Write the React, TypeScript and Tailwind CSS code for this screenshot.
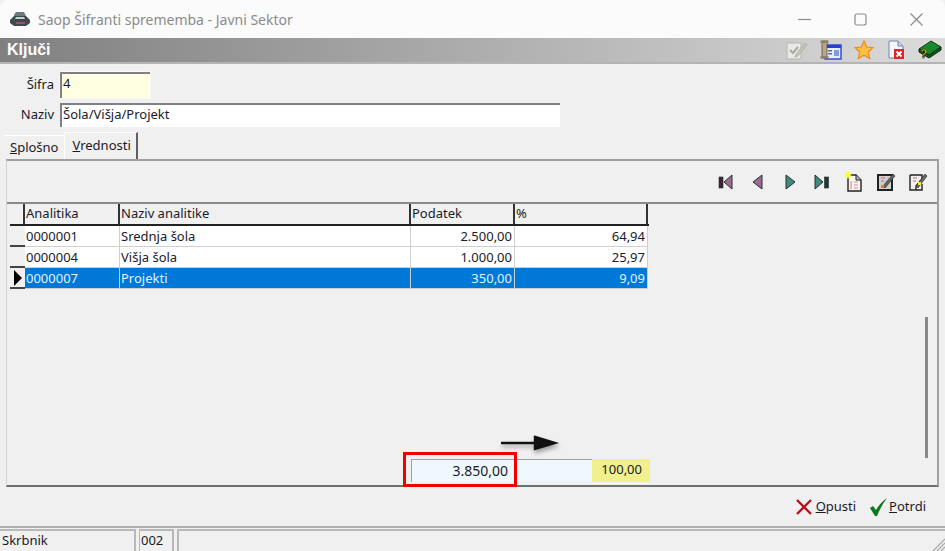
const rows = [
  { code: '0000001', name: 'Srednja šola', value: '2.500,00', pct: '64,94' },
  { code: '0000004', name: 'Višja šola', value: '1.000,00', pct: '25,97' },
  { code: '0000007', name: 'Projekti', value: '350,00', pct: '9,09', selected: true },
];

function PrinterIcon() {
  return (
    <svg width="20" height="14" viewBox="0 0 20 14">
      <path d="M0 8 L4 4 H16 L20 8 V11 L16 14 H4 L0 11 Z" fill="#3f4a4c" />
      <path d="M4 3 L6 0 H14 L16 4 H4 Z" fill="#6d7a7c" />
      <path d="M6 5 H14 L15 7 H5 Z" fill="#c9d0d0" />
      <rect x="6" y="10" width="9" height="2" fill="#a04a80" />
    </svg>
  );
}

function ToolbarIcons() {
  return (
    <div className="flex items-center gap-[12px]">
      <svg width="22" height="20" viewBox="0 0 22 20">
        <rect x="1" y="3" width="14" height="16" fill="#e8e8e4" stroke="#b5b5ae" />
        <path d="M4 10 L7 13 L12 7" fill="none" stroke="#a8a8a0" strokeWidth="2" />
        <path d="M10 14 L19 3 L21 5 L12 16 L9 17 Z" fill="#c4c4bc" stroke="#a0a098" strokeWidth="0.6" />
      </svg>
      <svg width="22" height="20" viewBox="0 0 22 20">
        <rect x="5" y="5" width="16" height="14" fill="#e8effc" stroke="#2a3fd8" strokeWidth="1.4" />
        <rect x="5" y="5" width="16" height="3" fill="#2a3fd8" />
        <rect x="14" y="10" width="5" height="6" fill="#7d9be0" />
        <rect x="8" y="10" width="4" height="1.5" fill="#5a6a9a" />
        <rect x="8" y="13" width="4" height="1.5" fill="#5a6a9a" />
        <rect x="2" y="1" width="5" height="17" fill="#b8a888" stroke="#5e5240" strokeWidth="0.8" />
        <rect x="0.5" y="0.5" width="8" height="2.5" fill="#8f8268" />
        <rect x="0.5" y="16" width="8" height="2.5" fill="#8f8268" />
      </svg>
      <svg width="20" height="20" viewBox="0 0 20 20">
        <path d="M10 1 L12.7 7 L19 7.7 L14.3 12 L15.6 18.5 L10 15.2 L4.4 18.5 L5.7 12 L1 7.7 L7.3 7 Z" fill="#fdc040" stroke="#ee8a1c" strokeWidth="1.2" />
      </svg>
      <svg width="20" height="20" viewBox="0 0 20 20">
        <path d="M3 1 H12 L17 6 V18 H3 Z" fill="#f4f6fb" stroke="#6d86b8" />
        <path d="M12 1 V6 H17" fill="#c8d4ea" stroke="#6d86b8" />
        <rect x="8" y="9" width="10" height="10" fill="#d8262a" />
        <path d="M10.5 11.5 L15.5 16.5 M15.5 11.5 L10.5 16.5" stroke="#fff" strokeWidth="2" />
      </svg>
      <svg width="24" height="20" viewBox="0 0 24 20">
        <path d="M1 9 L13 1 L23 7 L11 15 Z" fill="#18882c" stroke="#0a3a12" />
        <path d="M1 9 V12 L11 18 L23 10 V7 L11 15 Z" fill="#0f5a1c" stroke="#0a2a10" />
        <text x="2" y="18" fontSize="12" fontWeight="700" fill="#f7e61c" stroke="#000" strokeWidth="0.5" fontFamily="Liberation Sans, sans-serif">?</text>
      </svg>
    </div>
  );
}

function NavIcons() {
  const dark = '#24302e';
  return (
    <div className="flex items-center gap-[12px]">
      <svg width="20" height="18" viewBox="0 0 20 18">
        <rect x="3" y="4" width="4" height="11" fill="#3d2438" stroke={dark} strokeWidth="0.6" />
        <path d="M16 2 V16 L8 9 Z" fill="#a06a94" stroke={dark} />
      </svg>
      <svg width="20" height="18" viewBox="0 0 20 18">
        <path d="M14 2 V16 L5 9 Z" fill="#a06a94" stroke={dark} />
      </svg>
      <svg width="20" height="18" viewBox="0 0 20 18">
        <path d="M6 2 V16 L15 9 Z" fill="#3e8a7e" stroke={dark} />
      </svg>
      <svg width="20" height="18" viewBox="0 0 20 18">
        <path d="M3 2 V16 L11 9 Z" fill="#3e8a7e" stroke={dark} />
        <rect x="12.5" y="4" width="4" height="11" fill="#1c3a34" stroke={dark} strokeWidth="0.6" />
      </svg>
      <svg width="20" height="22" viewBox="0 0 20 22">
        <path d="M4 4 H12 L17 9 V20 H4 Z" fill="#f4f4f4" stroke="#222" strokeWidth="1.4" />
        <path d="M12 4 V9 H17" fill="#bbb" stroke="#222" />
        <path d="M7 10 V18 M10 11 H14 M10 14 H14 M10 17 H14" stroke="#e88" strokeWidth="1.2" />
        <path d="M4 0 L5 2 L7 1 L6 3 L8 4 L6 5 L7 7 L5 6 L4 8 L3 6 L1 7 L2 5 L0 4 L2 3 L1 1 L3 2 Z" fill="#ffff20" />
      </svg>
      <svg width="20" height="20" viewBox="0 0 20 20">
        <rect x="2" y="3" width="14" height="15" fill="#cfcfcf" stroke="#222" strokeWidth="2" />
        <path d="M5 6 H9 M5 9 H8" stroke="#d66" strokeWidth="1.2" />
        <path d="M7 14 L17 2 L19 4 L9 16 Z" fill="#666" stroke="#222" strokeWidth="0.6" />
        <rect x="5" y="13" width="3" height="3" fill="#e8802a" />
      </svg>
      <svg width="20" height="20" viewBox="0 0 20 20">
        <path d="M2 3 H14 V7 L8 14 V18 H14 V12 M2 3 V18 H14" fill="#f0f0f0" stroke="#222" strokeWidth="1.4" />
        <path d="M5 6 H9 M5 9 H8" stroke="#d66" strokeWidth="1.2" />
        <path d="M8 14 L17 2 L19 4 L10 16 Z" fill="#666" stroke="#222" strokeWidth="0.6" />
        <rect x="10" y="10" width="3" height="3" fill="#f4ec30" />
      </svg>
    </div>
  );
}

export default function App() {
  return (
    <div className="w-[945px] h-[551px] overflow-hidden flex flex-col bg-[#f0f0f0] text-[13px] text-[#1a1a2a]" style={{ fontFamily: 'Tahoma, "Noto Sans", "Liberation Sans", sans-serif' }}>
      {/* Title bar */}
      <div className="h-[38px] shrink-0 bg-[#fbfbfb] flex items-center pl-[10px] rounded-t-lg">
        <PrinterIcon />
        <span className="ml-[8px] text-[14px] text-[#8b8b8b]">Saop Šifranti sprememba - Javni Sektor</span>
        <div className="ml-auto flex items-center gap-[43px] pr-[22px] text-[#8c8c8c]">
          <svg width="13" height="13" viewBox="0 0 13 13"><path d="M0 6.5 H13" stroke="currentColor" strokeWidth="1.2" /></svg>
          <svg width="13" height="13" viewBox="0 0 13 13"><rect x="1" y="1" width="11" height="11" rx="2" fill="none" stroke="currentColor" strokeWidth="1.2" /></svg>
          <svg width="13" height="13" viewBox="0 0 13 13"><path d="M0.5 0.5 L12.5 12.5 M12.5 0.5 L0.5 12.5" stroke="currentColor" strokeWidth="1.2" /></svg>
        </div>
      </div>

      {/* Header */}
      <div className="h-[26px] shrink-0 flex items-center justify-between pl-[7px] pr-[3px] bg-gradient-to-r from-[#808080] to-[#dcdcdc] border-b-2 border-[#b4b4b4]">
        <span className="text-[16px] font-bold text-white" style={{ fontFamily: '"Liberation Sans", sans-serif' }}>Ključi</span>
        <ToolbarIcons />
      </div>

      {/* Form */}
      <div className="shrink-0 flex flex-col gap-[5px] pt-[8px]">
        <div className="flex items-center">
          <label className="w-[54px] text-right mr-[6px]">Šifra</label>
          <div className="w-[90px] h-[26px] px-[1px] bg-[#ffffe1] border-t-2 border-l-2 border-[#808080] outline outline-[#fafafa]">4</div>
        </div>
        <div className="flex items-center">
          <label className="w-[54px] text-right mr-[6px]">Naziv</label>
          <div className="w-[500px] h-[24px] px-[1px] bg-white border-t-2 border-l-2 border-[#808080]">Šola/Višja/Projekt</div>
        </div>
      </div>

      {/* Tabs */}
      <div className="shrink-0 flex items-end h-[29px] pl-[4px] mt-[3px]">
        <div className="h-[24px] px-[6px] flex items-center bg-[#f0f0f0] border-t border-white">
          <span><span className="underline">S</span>plošno</span>
        </div>
        <div className="h-[27px] pl-[7px] pr-[5px] flex items-center bg-[#f0f0f0] border-t border-l border-white border-r-2 border-r-[#606060]">
          <span><span className="underline">V</span>rednosti</span>
        </div>
      </div>

      {/* Panel */}
      <div className="relative h-[328px] shrink-0 mx-[6px] border-t-2 border-[#a0a0a0] border-b-2 border-b-[#707070] border-r-2 border-r-[#a0a0a0] border-l border-l-[#d0d0d0] flex flex-col">
        <div className="h-[43px] shrink-0 flex items-center justify-end pr-[9px] border-b-2 border-[#8a8a8a]">
          <NavIcons />
        </div>

        <div className="flex-1 flex pl-[3px] pr-[4px] min-h-0">
          <div className="flex-1 flex flex-col min-w-0">
            {/* Grid */}
            <div className="w-[639px]">
              <div className="flex h-[22px] border-b-2 border-[#222]">
                <div className="w-[15px] border-r-2 border-[#333]" />
                <div className="w-[95px] pl-[1px] border-r-2 border-[#333]">Analitika</div>
                <div className="w-[291px] pl-[1px] border-r-2 border-[#333]">Naziv analitike</div>
                <div className="w-[104px] pl-[1px] border-r-2 border-[#333]">Podatek</div>
                <div className="w-[133px] pl-[1px] border-r-2 border-[#333]">%</div>
              </div>
              {rows.map((row) => (
                <div key={row.code} className="flex h-[21px] leading-[20px]">
                  <div className="w-[15px] flex items-center justify-center border-b-2 border-[#444]">
                    {row.selected && <svg width="9" height="16" viewBox="0 0 9 16"><path d="M1 0 L9 8 L1 16 Z" fill="#000" /></svg>}
                  </div>
                  {[
                    { text: row.code, w: 'w-[95px]', align: '' },
                    { text: row.name, w: 'w-[291px]', align: '' },
                    { text: row.value, w: 'w-[104px]', align: 'text-right' },
                    { text: row.pct, w: 'w-[133px]', align: 'text-right' },
                  ].map((cell, i) => (
                    <div
                      key={i}
                      className={`${cell.w} ${cell.align} px-[1px] pr-[2px] border-r border-b border-[#cfcfcf] ${row.selected ? 'bg-[#0078d7] text-[#e4f1ff]' : 'bg-white'}`}
                    >
                      {cell.text}
                    </div>
                  ))}
                </div>
              ))}
            </div>

            {/* Totals */}
            <div className="mt-auto mb-[3px] flex h-[23px] pl-[401px]">
              <div className="w-[101px] h-full bg-[#eef8fd] border-t border-l border-[#a0a0a0] text-right pr-[4px] text-[14px] leading-[21px]">3.850,00</div>
              <div className="w-[80px] h-full bg-[#eef8fd] border-t border-[#a0a0a0]" />
              <div className="w-[58px] h-full bg-[#f0f08c] text-right pr-[8px] leading-[21px]">100,00</div>
            </div>
          </div>

          {/* Scrollbar */}
          <div className="w-[14px] flex justify-center pt-[113px] pb-[27px]">
            <div className="w-[3px] h-full bg-[#888]" />
          </div>
        </div>

        {/* Callout drawn over the screenshot */}
        <div className="absolute left-[396px] top-[291px] w-[114px] h-[35px] border-[3px] border-[#f00000]" />
        <svg className="absolute left-[492px] top-[273px] drop-shadow-[1px_3px_2px_rgba(0,0,0,0.35)]" width="62" height="20" viewBox="0 0 62 20">
          <path d="M2 9 H36 M36 3 L56 9 L36 15 Z" fill="#111" stroke="#111" strokeWidth="2.4" />
        </svg>
      </div>

      {/* Buttons */}
      <div className="h-[41px] shrink-0 flex items-center justify-end gap-[13px] pr-[19px] border-b-2 border-[#b0b0b0]">
        <button className="flex items-center gap-[3px]">
          <svg width="18" height="18" viewBox="0 0 18 18"><path d="M2 2 L16 16 M16 2 L2 16" stroke="#b5141c" strokeWidth="2.4" /></svg>
          <span><span className="underline">O</span>pusti</span>
        </button>
        <button className="flex items-center">
          <svg width="20" height="20" viewBox="0 0 20 20"><path d="M1 11 L4 9 L7 13 Q11 6 18 1 Q12 9 8 19 H6 Z" fill="#0a7a1c" /></svg>
          <span><span className="underline">P</span>otrdi</span>
        </button>
      </div>

      {/* Status bar */}
      <div className="flex-1 flex gap-[3px] pt-[1px] relative leading-[18px]">
        <div className="w-[136px] border-t-2 border-r-2 border-[#b8b8b8] pl-[2px]">Skrbnik</div>
        <div className="w-[35px] border-t-2 border-l border-r-2 border-[#b8b8b8] pl-[1px]">002</div>
        <div className="flex-1 border-t-2 border-l-2 border-[#b8b8b8]" />
        <svg className="absolute right-0 bottom-0" width="14" height="14" viewBox="0 0 14 14">
          <path d="M14 2 L2 14 M14 6 L6 14 M14 10 L10 14" stroke="#a8a8a8" strokeWidth="1.2" />
        </svg>
      </div>
    </div>
  );
}
